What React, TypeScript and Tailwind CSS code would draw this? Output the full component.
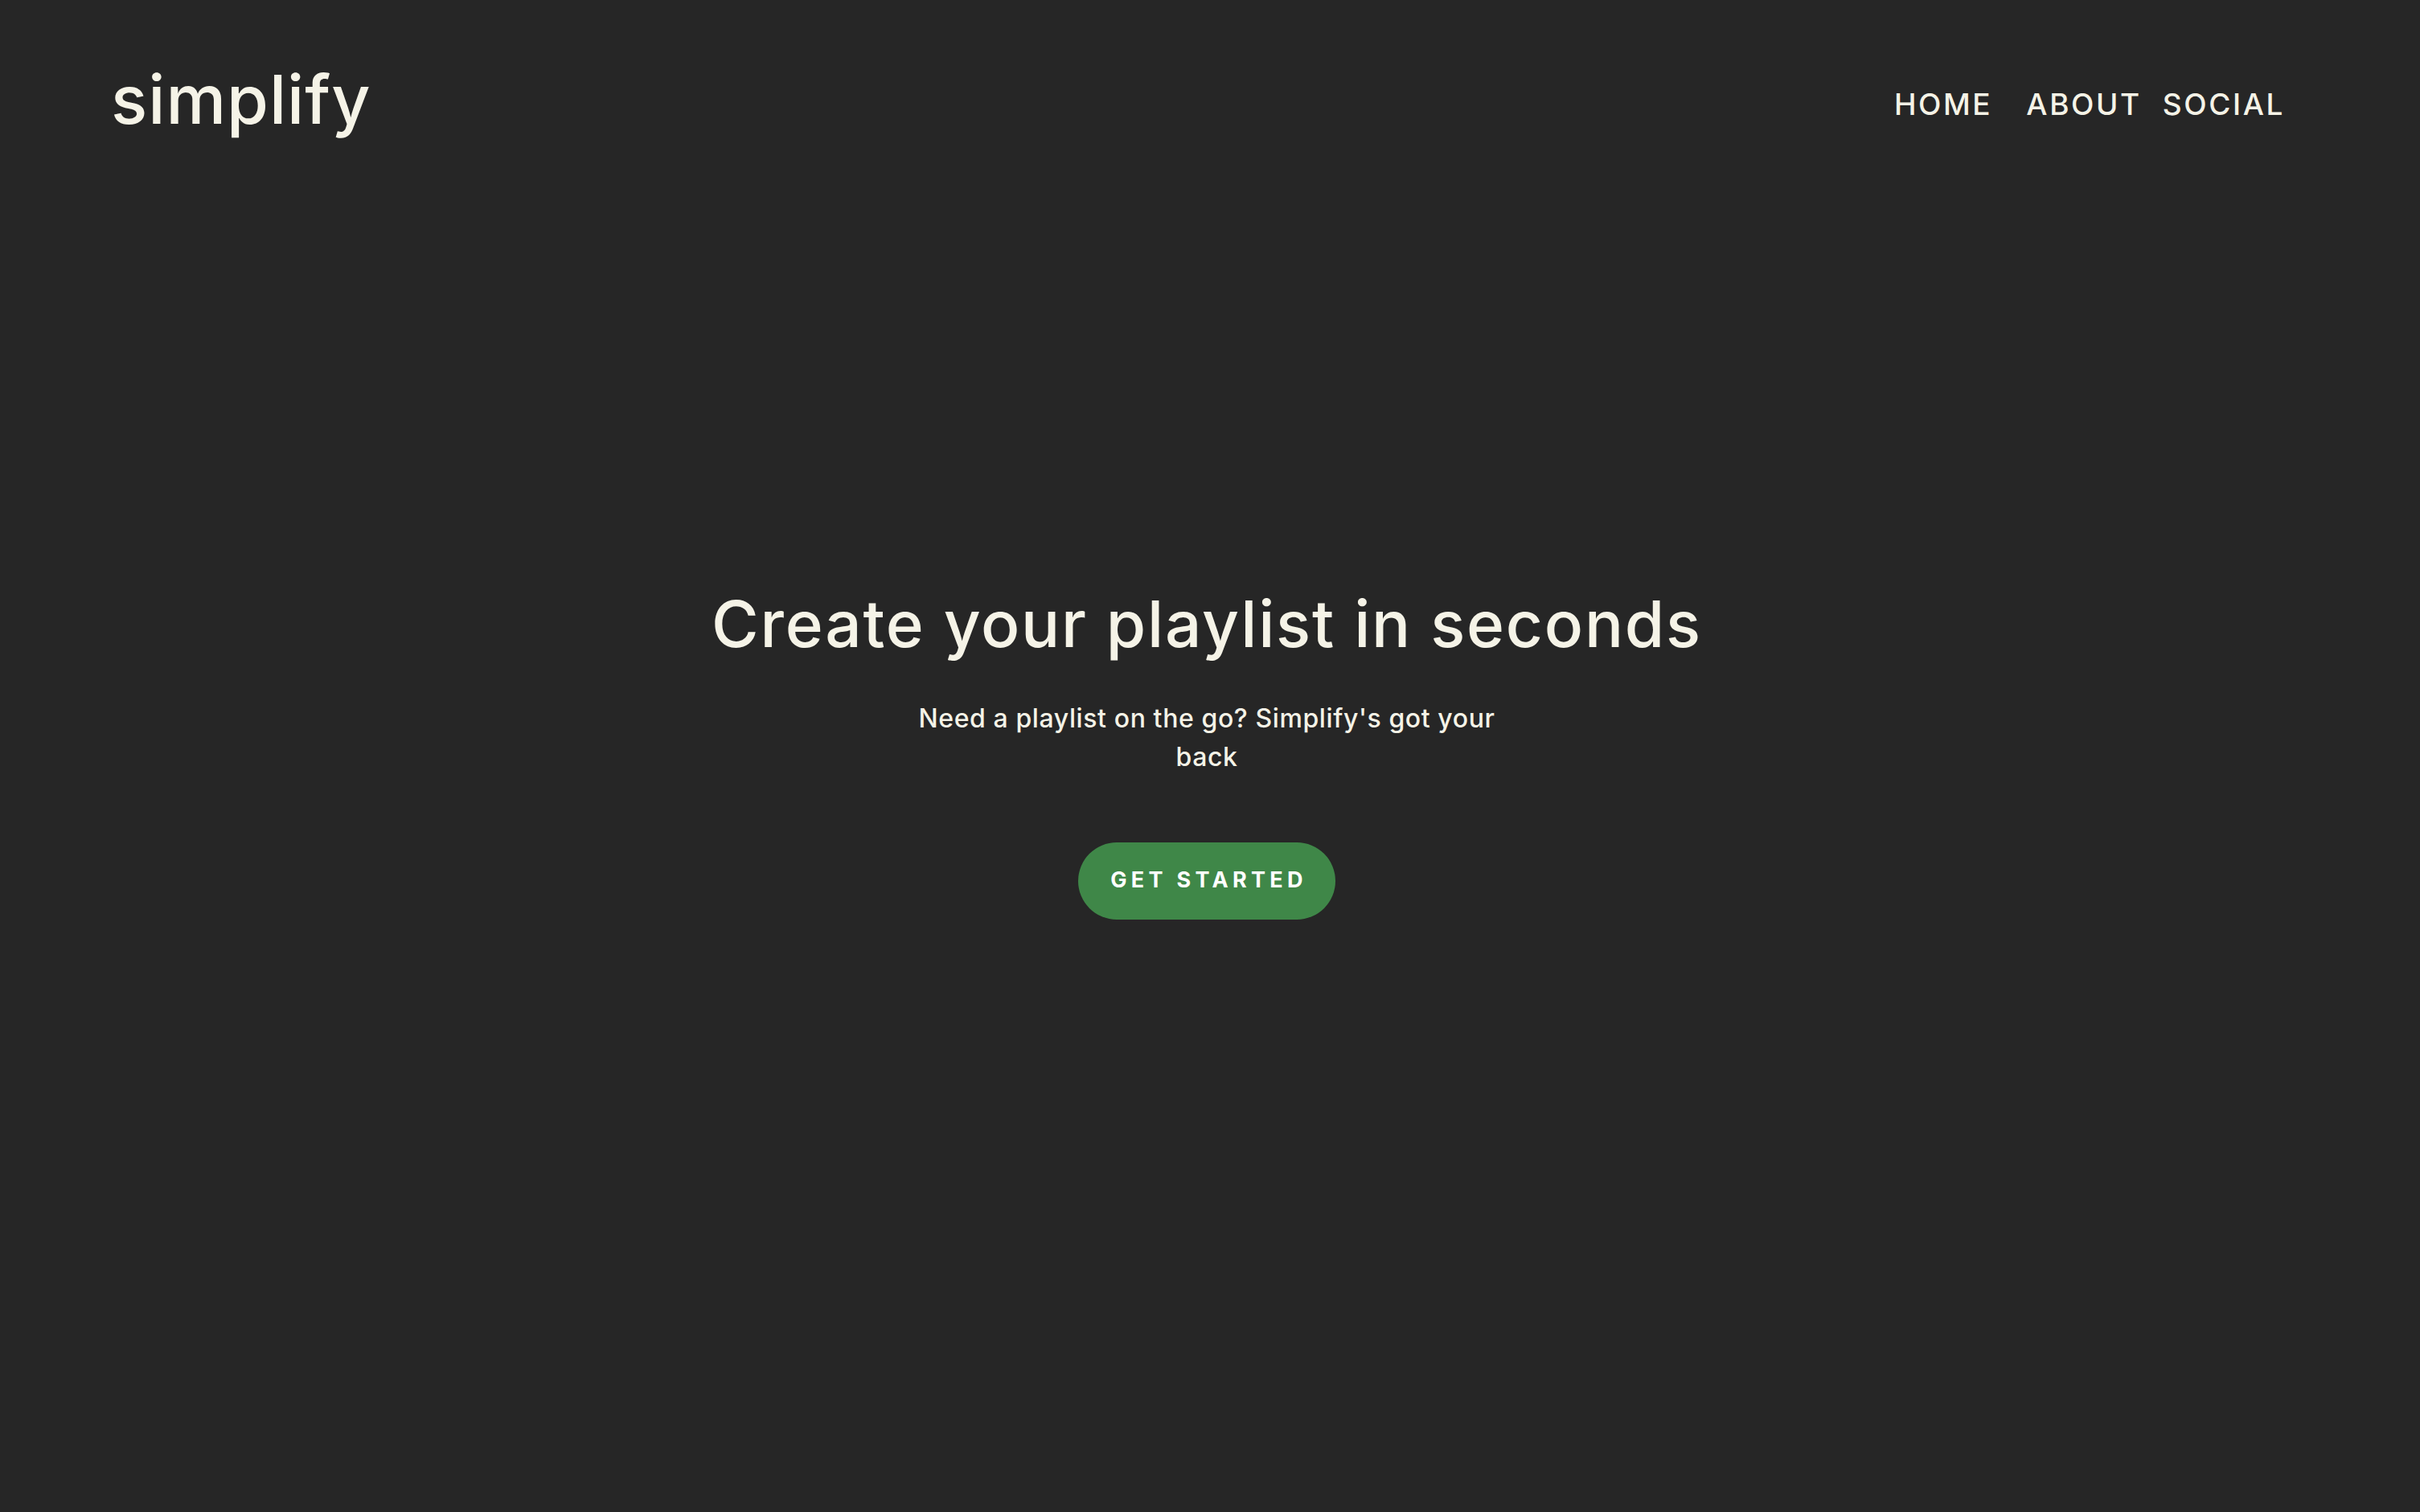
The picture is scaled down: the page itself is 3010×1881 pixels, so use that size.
import React from "react";

export default function App() {
  return (
    <div
      className="min-h-screen bg-[#262626] flex flex-col text-[#f5f3e7]"
      style={{ fontFamily: "Inter, 'Noto Sans', sans-serif" }}
    >
      <header className="h-[200px] flex items-start justify-between pl-[138px] pr-[168px] pt-[82px]">
        <div className="text-[84px] leading-none font-medium tracking-[1px]">simplify</div>
        <nav className="flex items-center pt-[29px] text-[37px] leading-none font-medium tracking-[2.6px]">
          <a className="mr-[42px]">HOME</a>
          <a className="mr-[26px]">ABOUT</a>
          <a>SOCIAL</a>
        </nav>
      </header>
      <main className="flex-1 flex flex-col items-center justify-center pr-[8px]">
        <h1 className="text-[80px] leading-none font-medium tracking-[1.8px] -mt-[2px]">
          Create your playlist in seconds
        </h1>
        <p className="mt-[54px] text-[32px] leading-[48px] font-medium text-center tracking-[0.6px]">
          Need a playlist on the go? Simplify's got your
          <br />
          back
        </p>
        <button className="mt-[82px] w-[320px] h-[96px] rounded-full bg-[#3f8748] text-white text-[27px] font-bold tracking-[5.3px] pl-[5px] flex items-center justify-center">
          GET STARTED
        </button>
      </main>
      <div className="h-[200px]" />
    </div>
  );
}
